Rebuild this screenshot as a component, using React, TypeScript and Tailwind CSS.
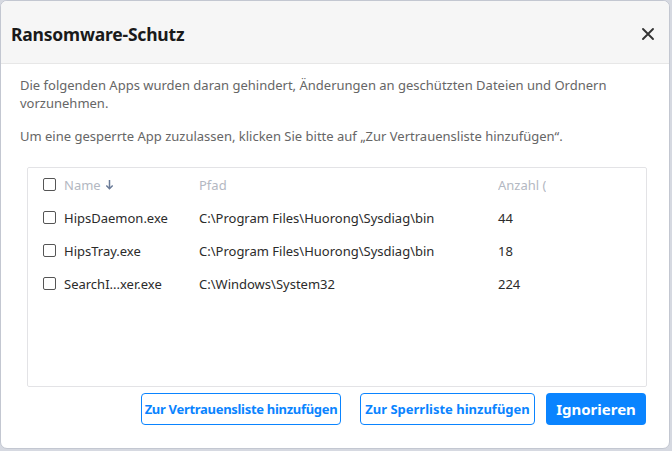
import React from "react";

const rows = [
    { name: "HipsDaemon.exe", path: "C:\\Program Files\\Huorong\\Sysdiag\\bin", count: "44" },
    { name: "HipsTray.exe", path: "C:\\Program Files\\Huorong\\Sysdiag\\bin", count: "18" },
    { name: "SearchI...xer.exe", path: "C:\\Windows\\System32", count: "224" },
];

const Box: React.FC = () => (
    <span className="w-[13px] h-[13px] shrink-0 border border-[#555] rounded-[2px] bg-white" />
);

export default function App() {
    return (
        <div className="w-[672px] h-[451px] bg-[#d6d9e1] font-['Noto_Sans',sans-serif]">
            <div className="w-[670px] h-[449px] bg-white border border-[#c3c7d1] rounded-[7px] overflow-hidden flex flex-col">
                {/* header */}
                <div className="h-[63px] shrink-0 bg-[#f6f6f6] border-b border-[#e7e7e7] flex items-center justify-between pl-[10px] pr-[14px] pt-[4px]">
                    <h1 className="text-[17.5px] font-bold text-[#1a1a1a] tracking-[-0.2px]">Ransomware-Schutz</h1>
                    <svg width="14" height="14" viewBox="0 0 14 14" className="text-[#333]">
                        <path d="M2 2 L12 12 M12 2 L2 12" stroke="currentColor" strokeWidth="1.9" strokeLinecap="round" />
                    </svg>
                </div>

                {/* body */}
                <div className="flex-1 px-[19px] pt-[12px] text-[13px] leading-[18px] text-[#666]">
                    <p>Die folgenden Apps wurden daran gehindert, Änderungen an geschützten Dateien und Ordnern vorzunehmen.</p>
                    <p className="mt-[15px]">Um eine gesperrte App zuzulassen, klicken Sie bitte auf „Zur Vertrauensliste hinzufügen“.</p>

                    <div className="mt-[22px] ml-[7px] w-[620px] h-[220px] border border-[#e3e3e6] rounded-[2px] text-[13px]">
                        <div className="h-[33px] flex items-center pl-[15px] text-[#b3b8c2]">
                            <Box />
                            <span className="w-[143px] pl-[8px] flex items-center gap-[4px]">
                                Name
                                <svg width="9" height="11" viewBox="0 0 9 11" className="text-[#6b7c99]">
                                    <path d="M4.5 1 V9.5 M1.3 6.5 L4.5 9.7 L7.7 6.5" stroke="currentColor" strokeWidth="1.5" fill="none" />
                                </svg>
                            </span>
                            <span className="w-[299px]">Pfad</span>
                            <span className="w-[48px] overflow-hidden whitespace-nowrap">Anzahl (Dateien)</span>
                        </div>
                        {rows.map((r) => (
                            <div key={r.name} className="h-[33px] flex items-center pl-[15px] text-[#2b2b2b]">
                                <Box />
                                <span className="w-[143px] pl-[8px] whitespace-nowrap">{r.name}</span>
                                <span className="w-[299px] whitespace-nowrap">{r.path}</span>
                                <span>{r.count}</span>
                            </div>
                        ))}
                    </div>

                    <div className="mt-[6px] flex justify-end gap-[11px] pr-[4px]">
                        <button className="h-[32px] w-[200px] rounded-[4px] border border-[#0a84ff] text-[#0a84ff] text-[13px] tracking-[-0.3px] font-bold whitespace-nowrap mr-[8px]">
                            Zur Vertrauensliste hinzufügen
                        </button>
                        <button className="h-[32px] w-[175px] rounded-[4px] border border-[#0a84ff] text-[#0a84ff] text-[13px] font-bold whitespace-nowrap">
                            Zur Sperrliste hinzufügen
                        </button>
                        <button className="h-[32px] w-[100px] rounded-[4px] bg-[#0a84ff] text-white text-[15px] font-bold">
                            Ignorieren
                        </button>
                    </div>
                </div>
            </div>
        </div>
    );
}
